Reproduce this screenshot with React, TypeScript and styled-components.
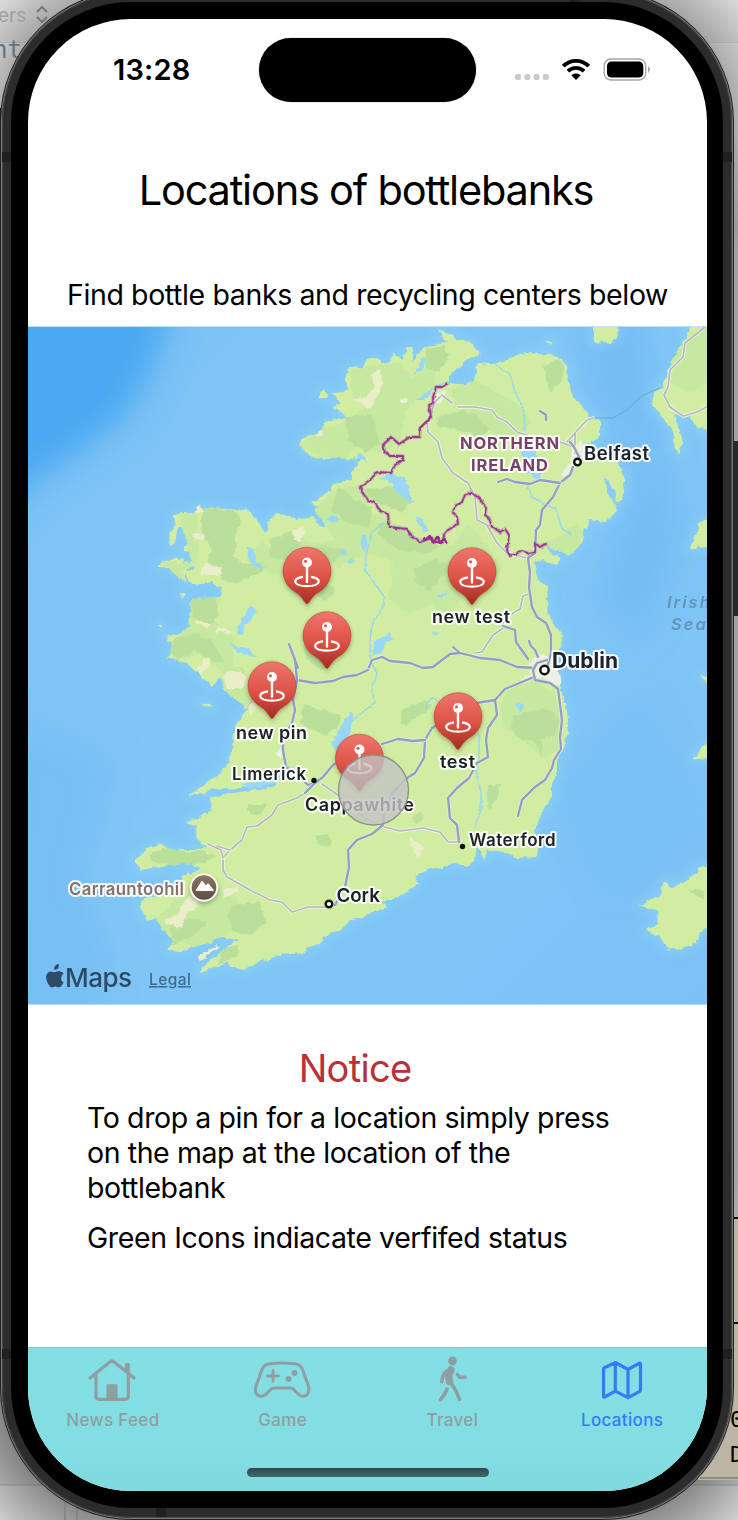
import React from "react";
import styled, { createGlobalStyle } from "styled-components";

const GlobalStyle = createGlobalStyle`
  * { box-sizing: border-box; }
  html, body, #root { margin: 0; height: 100%; }
  body { overflow: hidden; font-family: Inter, "Liberation Sans", sans-serif; color: #000; }
`;

const Desktop = styled.div`
  position: relative;
  width: 738px;
  height: 1520px;
  overflow: hidden;
  display: flex;
  background:
    radial-gradient(circle at 125px 120px, rgba(70,70,70,.75) 70px, transparent 175px),
    radial-gradient(circle at 610px 120px, rgba(70,70,70,.75) 70px, transparent 180px),
    radial-gradient(circle at 125px 1400px, rgba(60,60,60,.8) 80px, transparent 185px),
    radial-gradient(circle at 610px 1400px, rgba(60,60,60,.8) 80px, transparent 185px),
    linear-gradient(#dedede 0 42px, #d2d2d2 42px 43px, #e9e9e9 43px 130px, #a2a2a2 230px 1150px, #cfcfcf 1484px, #adadad 1485px, #dcdcdc 1486px);
`;

const Backdrop = styled.svg`
  position: absolute;
  inset: 0;
`;

const Phone = styled.div`
  position: relative;
  flex: none;
  width: 730px;
  height: 1526px;
  margin: -8px 0 0 2px;
  padding: 10px 9px;
  border-radius: 130px;
  background: #2c2c2c;
  box-shadow: inset 0 0 0 1px #4a4a4a, 0 0 0 1px #777, 0 0 0 2px #222;
`;

const Seam = styled.i<{ $x: number; $y: number; $w: number; $h: number }>`
  position: absolute;
  left: ${(p) => p.$x}px;
  top: ${(p) => p.$y}px;
  width: ${(p) => p.$w}px;
  height: ${(p) => p.$h}px;
  background: #202020;
`;

const Bezel = styled.div`
  position: relative;
  height: 100%;
  padding: 17px 16px 17px 17px;
  border-radius: 120px;
  background: #000;
`;

const Screen = styled.div`
  height: 100%;
  display: flex;
  flex-direction: column;
  border-radius: 103px;
  overflow: hidden;
  background: #fff;
`;

const StatusBar = styled.header`
  height: 101px;
  flex: none;
  display: flex;
  align-items: flex-start;
  padding-left: 85px;
`;

const Clock = styled.div`
  width: 146px;
  padding-top: 32px;
  font-size: 29px;
  line-height: 37px;
  font-weight: 600;
  letter-spacing: 0.15px;
`;

const Island = styled.div`
  width: 217px;
  height: 64px;
  margin-top: 19px;
  border-radius: 32px;
  background: #000;
  box-shadow: 0 0 1px #555;
`;

const StatusIcons = styled.svg`
  margin: 36px 0 0 39px;
`;

const Title = styled.h1`
  margin: 0;
  height: 150px;
  padding-top: 44px;
  padding-right: 3px;
  flex: none;
  font-size: 41.5px;
  line-height: 52px;
  font-weight: 400;
  text-align: center;
  letter-spacing: -1.2px;
  white-space: nowrap;
`;

const Subtitle = styled.p`
  margin: 0;
  height: 56px;
  padding-top: 7px;
  flex: none;
  font-size: 28.5px;
  line-height: 36px;
  text-align: center;
  letter-spacing: -0.38px;
  white-space: nowrap;
`;

const MapFrame = styled.svg`
  display: block;
  flex: none;
  width: 679px;
  height: 679px;
  font-family: Inter, "Liberation Sans", sans-serif;
`;

const NoticeBox = styled.section`
  flex: 1;
  width: 536px;
  margin-left: 59px;
  padding-top: 40px;
`;

const NoticeTitle = styled.h2`
  margin: 0 0 9px;
  font-size: 38px;
  line-height: 46px;
  font-weight: 400;
  color: #bb2f38;
  text-align: center;
  letter-spacing: -0.7px;
`;

const NoticeText = styled.p`
  margin: 0 0 15px;
  font-size: 28.5px;
  line-height: 35px;
  letter-spacing: -0.4px;
  white-space: nowrap;
`;

const TabBar = styled.nav`
  position: relative;
  height: 144px;
  flex: none;
  display: grid;
  grid-template-columns: repeat(4, 1fr);
  border-top: 1px solid #9dbfc4;
  background: linear-gradient(#84dfe5, #83dee4 70%, #7fd9de);
`;

const Tab = styled.a<{ $active?: boolean }>`
  display: flex;
  flex-direction: column;
  align-items: center;
  padding-top: 4px;
  color: ${(p) => (p.$active ? "#347cf6" : "#8f9ea1")};
  font-size: 17px;
  line-height: 22px;
  font-weight: 500;
  letter-spacing: 0.35px;
`;

const TabIcon = styled.svg`
  width: 60px;
  height: 56px;
  margin: 0 1px 1px 0;
  fill: none;
  stroke: currentColor;
  stroke-width: 3.2;
  stroke-linecap: round;
  stroke-linejoin: round;
`;

const HomeIndicator = styled.div`
  position: absolute;
  left: 219px;
  bottom: 14px;
  width: 242px;
  height: 9px;
  border-radius: 5px;
  background: linear-gradient(#2f4a4d, #41686b);
`;

const roads: string[] = [
  "M573 467L570 475 560 483 553 497 542 510 540 525 536 530 535 553 528 558 530 573 529 587 532 607 537 617 546 623 551 635 551 653 547 668",
  "M498 482L507 479 515 482 530 484 540 480 560 483",
  "M540 411l6 4v5",
  "M503 626L515 630 516 642 528 659",
  "M529 641l2 5 4 4 3 7",
  "M453 647L460 653M368 670L372 660 382 657 390 661 410 663 423 668 433 667 450 654 460 653 480 658 500 660 517 667 535 668",
  "M297 680L315 683 333 681 343 677 357 675 368 670",
  "M289 644L298 668 295 660 297 680 293 700 295 710 292 723 283 737 283 750 286 767 297 775 308 785 315 783",
  "M305 793L315 783 323 777 333 765 350 755 375 745",
  "M335 905L345 887 349 867 348 850 357 840 372 834 383 825 384 813 393 792 407 778 415 773 424 758 425 740 432 728 445 720",
  "M425 740L413 741 398 739 382 744",
  "M476 703L495 700 505 689 534 677M495 700L497 715 488 728 486 740 488 757 477 763 469 778 457 788 448 798 450 818 457 825 459 842",
  "M547 660L537 663 533 670 535 680 550 683 558 689 562 720 560 737 561 749 554 760 552 768 545 780 535 787 522 800 518 816",
  "M570 442l4 5 5 10",
];

const minorRoads: string[] = [
  "M442 395L435 402 427 423 428 432 438 442 442 458 453 473 468 483 475 497 477 520 487 525 497 543 507 553 527 558",
  "M442 395l10 8M458 407L475 407 492 410 497 417 507 422 517 432 533 437 560 442 573 447M567 442l8-9v20M575 433L587 420 593 418",
  "M529 594l-6 2-3 13-7 4-10 10",
  "M503 628L493 635 482 652 475 653",
  "M305 793L297 798 278 805 272 815 257 826 247 827 242 840 230 850 223 858 223 870 227 877 250 890 270 900 282 902 292 912 308 907 328 907",
  "M208 844l13 6 2 8M217 846l13 4",
  "M322 784L338 795 360 815 373 822 385 827 400 831 423 828 440 832 448 842 460 842",
  "M705 327L685 343 683 357 670 370 668 387 664 395 670 407 683 416 697 412 710 405",
];

const darkPatches: string[] = [
  "M202 507l35 5 4 9-6 13 2 12-5 10 10 7 25 2-8 9-22 8-15-2-5-12-10-6 4-12-5-12-5-3z",
  "M347 417l25-2 8 30-15 7-17-12z M425 349l20-4 4 14-10 13-13-4-2-13z",
  "M437 416l27-5 15 6 10 12-9 9-18-8-22-3z M545 366l12-6 8 6-4 16-12 10z",
  "M270 540l20-8 12 12-15 16-17-2z M283 556l40-10 24 4-18 18-23 2z",
  "M340 485l16 16 17 6-4 20-20-2-18-15z M362 489l34-2 16 13-10 12-24-9z",
  "M378 523l30 6 12 11 20 5-12 8-30-3-20-15z M414 569l20-9 25 7-18 9-11 15-15-9z",
  "M402 710l16-8 14 2-5 8-13 7-8 6-6-4z M304 704l15 5 22 7-3 11-12 8-12-4-14-9z",
  "M513 717l17-6 22-2 8 15-8 12-12 2 3 18-9-15-13-1-10-13z M488 786l12-2-2 13-8 12-4-2z",
  "M150 855l18-8 22 7 10-4 15 6-10 7-30 2-24-3z M232 905l27-3 8 20-19 13-14-2-6-18z",
  "M191 598l24 0 5 17-12 12-16-12z M174 640l24-7 15 10 13 20-13-2-18-12-16 12-9-10z",
  "M304 646l20 5 10 12-14 6-13-9z M249 805l18-2-5 11-9 1-6-6z M315 836l12-2 5 7-4 7-11-6z",
  "M170 925l22-7 14 3-8 12-24 12z M223 948l15-3-2 12-18 8z M412 817l10-6 1 9-8 3z M690 890l14 1v7l-10-3z",
  "M314 588l18-4 3 6-9 10-8-3z M296 573l8 12-6 8-6-10z",
];

const softPatches: string[] = [
  "M300 446l20-16 25-8 30-20 30 9-5 30-22 12-20-8-13 14-20-2z M350 371l24-7 26-1 12 16 25-20-3 30-24 18-20 15-18-17-20-10z",
  "M315 510l20-20 24-6 13 28 25 12 22 20-22 18-28-8-32 12-20-21 18-7z",
  "M245 560l17-20 10 10 30-13 22 12-18 28-35-4z M452 390l24-10 20 12 26 16 10 16-18 15-33-12-24-6z",
  "M378 525l24 0 18 19 34 0 14-20 14 15 20 27-8 15-28 10-17 24-20-10-20 8-20-14 4-36z",
  "M507 687l24-7 22 12 10 26-5 32-16 8-20-20-16-8-6-20z M191 600l29-2-5 24 20 16-4 24 18 14-26-4-24-18-24 7-5-16 18-18z",
  "M156 920l20-20 28-16 24 5 15 18-8 23-32 16-30-4z",
  "M545 545l30-20 8 4-4 17-11 10z M668 370l15-30 24-16v60l-19 8-20-10z M222 669l20-2 14 20-9 22-24-20z",
  "M180 513l17 0 2 50-14 8-8-6 14-4-5-20z M162 562l14-2 12 22-10-4z",
];

const sandPatches: string[] = [
  "M352 399l14-2 8-10-2-12 8-7 3 15-4 12-9 14z M195 507l5-2 3 5-5 3z M192 534l11-1 1 5-9 2z",
  "M201 574l4-12 6 5 11 1-2 6-13 1z M293 532l9-6 3 3-3 13-8-3z M195 620l15 5-2 4-12-5z M217 626l17 7-5 2-12-4z",
  "M197 670l8-12 7 3-11 14z M223 675l9-5 14 5-1 13-18 0z M248 706l6-4 3 4-7 8z",
  "M181 907l12-17 10 10-18 18-4 10-14-3-2-5 14-7z M222 890l14-3 2 4-15 6z M411 837l7 5 5 6-5 12-4-10-4-2z",
  "M315 434l7-3 2 4-7 2z M197 957l19-11 3 2-19 12z",
];

const lakes: string[] = [
  "M380 478l11-5 15 6 3 14 5 9-12-4-10-15z M248 548l5 0 3 13 6 7-2 2-10-8-2-6z M341 550l4-2 2 6-4 2z",
  "M348 560l6-2 1 4-5 3z",
  "M362 535l5 0-1 17-6-4z M237 628l8-15 7-8 5 7-5 8-7 4-2 11-7-1z M228 645l20 3 9 9-12-2z",
  "M522 448l12-7 3 18-6 12 10 1-3 8-14-8z M515 706l2-5 8 5-4 5z M375 641l14-7 4 4-10 6-1 9-9 2z",
  "M344 722l8-11 2 9-5 14-4 10-6 11-4-5-3-8z M415 517l7 1 7 14-5 0z M436 597l11-5-5 7z M432 632l7-1-3 5z",
  "M288 765l-5 8-20 9-20 1 4 6 25-5 16-9 5-6z M443 384l-10 5-4 9-12 3 4-5 10-7 12-8z M364 455l-6-2 0 4 7 4z",
  "M331 516l9 3-5 3-9-2z M423 355l-5 14-6 7 8-4 5-10z",
];

const rivers: string[] = [
  "M495 364l15 10 4 15 10 22 1 22 2 12",
  "M383 523l-11 9-5 18-2 20 10 14 10 14-4 13-8 11-3 18 1 22 6 12-6 14 4 14-12 10-14 12-8 9",
  "M526 482l6 15 12 7 12 5 6 20 9 5",
  "M426 710l2-8 5-4 9 6M479 732v25l-3 15 5 20 0 18-7 18",
];

const landPaths: string[] = [
  "M298 446L305 437 322 432 325 422 348 418 333 407 340 402 333 393 346 392 346 373 350 367 362 368 367 360 377 358 387 365 395 352 402 360 407 348 413 348 413 362 423 348 437 343 447 342 437 328 453 335 457 340 470 342 480 353 468 359 453 372 444 386 450 383 468 385 475 377 478 363 493 364 507 360 525 352 542 353 557 357 567 365 568 383 573 397 587 412 592 418 600 420 600 435 590 443 580 452 582 458 600 460 617 460 625 480 622 500 617 502 614 490 606 478 600 462 605 475 608 497 617 505 615 513 605 522 590 520 583 533 582 543 568 555 547 545 550 553 562 558 557 565 542 560 534 563 538 580 547 587 547 607 552 623 563 635 560 648 553 655 557 670 560 685 565 703 568 732 563 750 557 760 557 773 552 783 552 797 542 813 535 830 538 847 537 857 515 858 507 853 495 852 487 849 485 860 477 847 475 860 467 867 457 863 437 868 427 870 415 877 418 882 415 888 397 897 382 902 387 907 373 912 362 918 350 920 345 927 323 938 320 945 307 947 305 953 280 955 260 962 243 970 233 967 227 962 210 970 200 973 202 967 217 955 237 940 223 937 197 945 180 952 167 950 175 940 187 930 203 917 180 925 165 925 164 918 148 920 140 907 143 900 180 887 183 877 200 868 187 862 167 865 140 870 135 860 147 848 163 843 170 850 193 850 207 847 197 840 195 825 187 822 200 817 212 810 210 798 233 793 273 787 283 775 240 788 213 790 188 797 207 783 220 772 227 767 232 750 233 735 238 720 250 707 253 688 228 688 220 677 212 687 197 672 187 663 167 657 177 647 165 637 180 633 195 625 190 617 190 605 200 598 223 597 220 587 210 583 192 585 186 573 183 582 175 568 158 567 167 560 183 558 187 572 193 570 197 553 183 550 188 540 184 527 180 525 172 547 169 538 175 520 172 517 180 513 189 520 197 507 213 508 237 510 247 508 255 517 265 533 270 520 277 513 297 520 312 517 320 525 328 525 317 513 325 510 312 503 330 490 330 485 353 480 352 473 363 457 348 460 343 455 330 458 313 457Z",
  "M689 326L685 347 682 363 667 377 662 387 653 393 652 407 663 417 673 430 675 450 680 453 682 443 677 423 675 415 690 417 697 427 710 432V326Z",
  "M593 326H617L618 335 612 342 593 343Z",
  "M710 517L700 523 690 550 710 546Z M710 740L702 748 693 760 710 757Z M700 675L710 678 706 682Z",
  "M710 866L700 868 685 882 673 887 663 883 660 895 639 905 647 908 657 910 658 923 646 930 660 937 667 948 677 950 697 943 700 932 710 927Z",
  "M320 393l3-4 4 5-2 4-5-1z M546 341l7 0-2 4z M180 593l5 1-4 3z M158 624l4 0-2 3z M200 702l10 3 2 3-7-2z",
];

const border =
  "M447 383L443 387 436 387 433 398 433 403 429 405 431 417 420 428 420 437 410 437 399 444 391 437 383 445 385 452 390 456 403 456 403 460 395 465 391 473 377 472 370 480 360 487 362 492 368 500 375 503 380 511 388 514 389 527 407 529 410 535 420 542 426 540 432 538 435 542 443 542 444 535 448 530 458 524 457 517 453 512 455 506 462 502 465 495 471 492 480 499 486 508 485 515 489 518 492 527 500 532 505 529 509 535 507 550 510 556 523 551 527 553 535 552 535 543 540 547 546 544";

interface MapLabel {
  text: string;
  x: number;
  y: number;
  w: number;
  size: number;
  color?: string;
  weight?: number;
}

const labels: MapLabel[] = [
  { text: "NORTHERN", x: 460, y: 449, w: 99, size: 16.5, color: "#78406a", weight: 700 },
  { text: "IRELAND", x: 471, y: 470.5, w: 77, size: 16.5, color: "#78406a", weight: 700 },
  { text: "Belfast", x: 584, y: 460, w: 65, size: 18.5 },
  { text: "Dublin", x: 552, y: 668, w: 66, size: 21, weight: 700 },
  { text: "new test", x: 432, y: 622.5, w: 78, size: 18 },
  { text: "new pin", x: 236, y: 738.5, w: 71, size: 18 },
  { text: "test", x: 440, y: 767.5, w: 35, size: 18 },
  { text: "Limerick", x: 232, y: 780, w: 74, size: 16.8 },
  { text: "Carrauntoohil", x: 69, y: 894.5, w: 115, size: 16.8, color: "#857168" },
  { text: "Waterford", x: 469, y: 846, w: 86.5, size: 17 },
  { text: "Cork", x: 336.5, y: 902, w: 43.5, size: 19 },
];

const pins = [
  [307, 571],
  [472, 571.5],
  [327, 635.5],
  [272, 685.5],
  [458, 716.5],
  [359.5, 758],
];

const HaloText = styled.text`
  paint-order: stroke;
  stroke: rgba(255, 255, 255, 0.88);
  stroke-width: 4px;
  stroke-linejoin: round;
`;

function Pin({ x, y }: { x: number; y: number }) {
  return (
    <g transform={`translate(${x} ${y})`}>
      <path
        d="M0 33C-2 33-4 26-11 21.500A24 24 0 1 1 11 21.500C4 26 2 33 0 33Z"
        fill="url(#pin)"
        stroke="#b9382f"
        strokeWidth=".5"
        filter="url(#pinShadow)"
      />
      <path d="M-4 5.800C-15 7-15 15 0 15.200 15 15 15 7 4 5.800" fill="none" stroke="#fff" strokeWidth="2.200" />
      <path d="M0-5V11" stroke="#fff" strokeWidth="2.400" strokeLinecap="round" />
      <circle cy="-8.500" r="5" fill="#fff" />
      <circle cx="-1.500" cy="-9.700" r="1.600" fill="#e4574c" />
    </g>
  );
}

function IrelandMap() {
  return (
    <MapFrame viewBox="28 326 679 679">
      <defs>
        <linearGradient id="sea" x1="0" y1="0" x2="1" y2="1">
          <stop offset="0" stopColor="#7cc3f5" />
          <stop offset=".5" stopColor="#80c6f6" />
          <stop offset="1" stopColor="#7cc2f5" />
        </linearGradient>
        <linearGradient id="pin" x1="0" y1="0" x2="0" y2="1">
          <stop offset="0" stopColor="#ee766c" />
          <stop offset=".55" stopColor="#dd5146" />
          <stop offset="1" stopColor="#a02b22" />
        </linearGradient>
        <linearGradient id="peak" x1="0" y1="0" x2="0" y2="1">
          <stop offset="0" stopColor="#8c786a" />
          <stop offset="1" stopColor="#5e4c42" />
        </linearGradient>
        <filter id="soft" x="-30%" y="-30%" width="160%" height="160%">
          <feGaussianBlur stdDeviation="16" />
        </filter>
        <filter id="shore">
          <feGaussianBlur stdDeviation="5" />
        </filter>
        <filter id="coast" x="0" y="0" width="100%" height="100%">
          <feTurbulence type="fractalNoise" baseFrequency=".14" numOctaves="3" seed="4" result="n" />
          <feDisplacementMap in="SourceGraphic" in2="n" scale="6" xChannelSelector="R" yChannelSelector="G" />
        </filter>
        <filter id="jagged">
          <feTurbulence type="fractalNoise" baseFrequency=".22" numOctaves="1" seed="9" result="n" />
          <feDisplacementMap in="SourceGraphic" in2="n" scale="3.5" xChannelSelector="R" yChannelSelector="G" />
        </filter>
        <filter id="pinShadow" x="-40%" y="-30%" width="180%" height="170%">
          <feDropShadow dx="0" dy="2" stdDeviation="2" floodColor="#33402a" floodOpacity=".4" />
        </filter>
      </defs>
      <rect x="28" y="326" width="679" height="679" fill="url(#sea)" />
      <g filter="url(#soft)">
        <path d="M0 290H175Q160 375 120 420L75 455 35 480 0 515Z" fill="#4ba8f1" />
        <path d="M580 300L640 300 650 400 680 540 640 640 600 600 640 470 590 390Z" fill="#71baf3" opacity=".75" />
        <path d="M570 790L640 700 690 820 610 890Z" fill="#76bff5" opacity=".7" />
        <path d="M0 720L110 760 80 880 110 960 90 1030H0Z" fill="#73bcf4" opacity=".7" />
      </g>
      <g fill="#8fd1f8" stroke="#8fd1f8" strokeWidth="10" strokeLinejoin="round" opacity=".6" filter="url(#shore)">
        {landPaths.map((d) => <path key={d} d={d} />)}
      </g>
      <g filter="url(#coast)">
        <g fill="#d1eda2">{landPaths.map((d) => <path key={d} d={d} />)}</g>
        <g fill="#c6e8a0">{softPatches.map((d) => <path key={d} d={d} />)}</g>
        <g fill="#badf9b">{darkPatches.map((d) => <path key={d} d={d} />)}</g>
        <g fill="#e9edc8">{sandPatches.map((d) => <path key={d} d={d} />)}</g>
        <g fill="#98d7f8">{lakes.map((d) => <path key={d} d={d} />)}</g>
        <path d="M533 658l12-6 12 12 4 20-10 2-8-9-14 4-14 2 16-9-3-9z M572 447l10-5 6 12-12 14-12 10-4-3 10-10z M437 392l8-1-2 10-8 3z M400 400l8-3-1 6-6 1z M275 755l6-7 1 10z" fill="#eef0e2" />
      </g>
      <g fill="none" stroke="#98d7ee" strokeWidth="1.500" strokeLinejoin="round" filter="url(#jagged)">
        {rivers.map((d) => <path key={d} d={d} />)}
      </g>
      <path d="M593 418L613 418 627 410 643 395 660 388" fill="none" stroke="#6aa8d2" strokeWidth="1" />
      <g fill="none" strokeLinejoin="round" strokeLinecap="round">
        {minorRoads.map((d) => (
          <React.Fragment key={d}>
            <path d={d} stroke="#eef3dc" strokeWidth="3.400" />
            <path d={d} stroke="#b4b8c0" strokeWidth="1.700" />
          </React.Fragment>
        ))}
        {roads.map((d) => (
          <React.Fragment key={d}>
            <path d={d} stroke="#e3edcf" strokeWidth="3.800" />
            <path d={d} stroke="#909fc5" strokeWidth="2.300" />
          </React.Fragment>
        ))}
        <g filter="url(#jagged)">
          <path d={border} stroke="#b274b0" strokeWidth="3.800" opacity=".45" />
          <path d={border} stroke="#9c388f" strokeWidth="1.800" />
          <path d="M425 540l5-4 3 7 4-6 4 6 4-4 2 4" stroke="#9c2b90" strokeWidth="2.400" />
        </g>
      </g>

      <g fill="#5f96bd" fontSize="16.500" fontStyle="italic" fontWeight="600" letterSpacing="2">
        <text x="667" y="608">Irish</text>
        <text x="671" y="629.500">Sea</text>
      </g>
      {labels.map((l) => (
        <HaloText
          key={l.text}
          x={l.x}
          y={l.y}
          textLength={l.w}
          fontSize={l.size}
          fontWeight={l.weight ?? 600}
          fill={l.color ?? "#20222a"}
        >
          {l.text}
        </HaloText>
      ))}
      <g fill="#fff" stroke="#111" strokeWidth="2.400">
        <circle cx="577.500" cy="462" r="3.300" />
        <circle cx="544.500" cy="670" r="4.200" />
        <circle cx="329" cy="904" r="3.300" />
      </g>
      <g fill="#111">
        <circle cx="314" cy="780.500" r="2.700" />
        <circle cx="462.500" cy="846.500" r="2.700" />
      </g>
      <g filter="url(#pinShadow)">
        <circle cx="204" cy="887.500" r="13.200" fill="url(#peak)" stroke="#f4f3ec" strokeWidth="2" />
      </g>
      <path d="M196 890.500l6-9.500 4 5 2-2.500 5.500 7z" fill="#fff" stroke="#fff" strokeLinejoin="round" />
      {pins.map(([x, y]) => <Pin key={`${x}-${y}`} x={x} y={y} />)}
      <HaloText x={305} y={810.5} textLength={109} fontSize={18} fontWeight={600} fill="#20222a">Cappawhite</HaloText>
      <circle cx="373.500" cy="790" r="35" fill="#c3c3c3" fillOpacity=".8" stroke="#8e9389" strokeWidth="1.400" />

      <g fill="#2d4b65">
        <path d="M60.700 970.500c.1-3 1.300-4.600 2.400-5.500-1.700-2.100-4.400-2.300-5.400-2.200-1.500.1-2.800 1-3.700 1-.9 0-2.200-.9-3.500-.9-3.600.1-6.200 4-4 9.800 1.200 3.200 2.800 5.700 4.700 6.200 1.400.1 2-.9 3.700-.9 1.700 0 2.200.9 3.600.8 2-.1 3.700-3.200 4.500-5.100-1.300-.6-2.300-1.800-2.300-3.200z M58 959.500c-.1-1.600.8-2.700 0-4-2.800.5-4.600 3-4.200 5.800 1.800.1 3.400-.6 4.200-1.800z" transform="translate(.5 8.500)" />
        <text x="65" y="986.500" textLength="67" fontSize="26" fontWeight="500">Maps</text>
      </g>
      <text x="149" y="985" textLength="42" fontSize="15.500" fontWeight="500" fill="#416a8d" textDecoration="underline">Legal</text>
      <path d="M28 326.500H707M28 1004.700H707" stroke="#bfe1fa" />
    </MapFrame>
  );
}

export default function App() {
  return (
    <>
      <GlobalStyle />
      <Desktop>
        <Backdrop width="738" height="1520" fontFamily="Inter, sans-serif">
          <text x="-2" y="22" fontSize="19" fill="#a0a0a0">ers</text>
          <path d="M37 12l5-5 5 5M37 17l5 5 5-5" fill="none" stroke="#777" strokeWidth="2" />
          <text x="-7" y="58" fontSize="24" fill="#66737f" fontFamily="DejaVu Sans Mono, monospace">nt</text>
          <path d="M0 108h3v17H0z" fill="#20124d" />
          <path d="M734 441h4v175h-4z" fill="#292929" />
          <path d="M732 1218h6v262h-40z" fill="#bcb5a4" />
          <path d="M700 1478h38" stroke="#918b7d" strokeWidth="2" />
          <path d="M734 1218h4M734 1323h4" stroke="#111" strokeWidth="2" />
          <text x="730" y="1427" fontSize="22" fontFamily="DejaVu Sans Mono, monospace">0</text>
          <text x="730" y="1462" fontSize="22" fontFamily="DejaVu Sans Mono, monospace">D</text>
          <path d="M65 1490v30M77 1490v30" stroke="#777" />
        </Backdrop>
        <Phone>
          <Seam $x={0} $y={160} $w={9} $h={10} />
          <Seam $x={721} $y={160} $w={9} $h={10} />
          <Seam $x={0} $y={1357} $w={9} $h={10} />
          <Seam $x={721} $y={1357} $w={9} $h={10} />
          <Seam $x={154} $y={1516} $w={10} $h={9} />
          <Seam $x={568} $y={0} $w={10} $h={10} />
          <Bezel>
            <Screen>
              <StatusBar>
                <Clock>13:28</Clock>
                <Island />
                <StatusIcons width="138" height="30" viewBox="515 55 138 30">
                  <g fill="#cacaca">
                    {[515, 524.3, 533.6, 542.9].map((x) => (
                      <rect key={x} x={x} y="74" width="6" height="6" rx="2" />
                    ))}
                  </g>
                  <g fill="none" stroke="#000" strokeWidth="3.800">
                    <path d="M563.200 66.200C570.500 59 581.500 59 588.800 66.200" />
                    <path d="M567.900 71.200C572.500 66.800 579.500 66.800 584.100 71.200" />
                  </g>
                  <path d="M576 80L571.300 75.300C574 72.800 578 72.800 580.700 75.300Z" />
                  <rect x="604.200" y="59" width="41.500" height="21" rx="6.500" fill="none" stroke="#a6a6a6" strokeWidth="1.400" />
                  <rect x="607" y="61.500" width="36.300" height="16" rx="4.500" />
                  <path d="M648 66q4 3.500 0 7z" fill="#a6a6a6" />
                </StatusIcons>
              </StatusBar>
              <Title>Locations of bottlebanks</Title>
              <Subtitle>Find bottle banks and recycling centers below</Subtitle>
              <IrelandMap />
              <NoticeBox>
                <NoticeTitle>Notice</NoticeTitle>
                <NoticeText>
                  To drop a pin for a location simply press<br />
                  on the map at the location of the<br />
                  bottlebank
                </NoticeText>
                <NoticeText>Green Icons indiacate verfifed status</NoticeText>
              </NoticeBox>
              <TabBar>
                <Tab>
                  <TabIcon viewBox="82 1352 60 56">
                    <path d="M90 1378L110.500 1361.500Q112 1360.500 113.500 1361.500L134 1378M96 1375V1396.500Q96 1399.300 99 1399.300H125.500Q128.300 1399.300 128.300 1396.500V1375" />
                    <path d="M124.800 1364.500q0-1.500 1.500-1.500h2q1.500 0 1.500 1.500v9l-5-4z M106.500 1399v-13.500q0-1.200 1.200-1.200h8.600q1.200 0 1.200 1.200V1399z" fill="currentColor" stroke="none" />
                  </TabIcon>
                  News Feed
                </Tab>
                <Tab>
                  <TabIcon viewBox="252 1352 60 56">
                    <path d="M268.500 1364Q282 1362 296 1364 300.500 1364.700 302.500 1369.500L308.300 1386C310.500 1393 306.500 1396.500 302.500 1396.200 299 1396 298 1394 294 1389.500Q292.500 1388 290.500 1388H274Q272 1388 270.500 1389.500C266.500 1394 265 1396 261.500 1396.200 257.500 1396.500 253.800 1393 256 1386L262 1369.500Q264 1364.700 268.500 1364Z" strokeWidth="3" />
                    <path d="M273 1370.500v11M267.500 1376h11" strokeWidth="2.800" />
                    <g fill="currentColor" stroke="none"><circle cx="294.500" cy="1373" r="2.900" /><circle cx="288.500" cy="1379" r="2.900" /></g>
                  </TabIcon>
                  Game
                </Tab>
                <Tab>
                  <TabIcon viewBox="422 1352 60 56">
                    <circle cx="452.500" cy="1361" r="4.400" fill="currentColor" stroke="none" />
                    <path d="M449.500 1370Q442.500 1372 441.800 1382" strokeWidth="3.400" />
                    <path d="M451 1370Q447.500 1376 449.500 1381.500" strokeWidth="7.500" />
                    <path d="M449.800 1382Q455 1387 459.500 1399.500M447 1389Q445.500 1394 440.500 1399.500M457.500 1374.500L459.500 1377.200H465" strokeWidth="3.600" />
                  </TabIcon>
                  Travel
                </Tab>
                <Tab $active>
                  <TabIcon viewBox="592 1352 60 56">
                    <path d="M603.500 1369.500Q603.500 1368.300 604.500 1367.700L615.300 1362.500 628 1369.500 639.500 1363.200Q640.500 1363 640.500 1364.500V1389.500Q640.500 1391 639.300 1391.600L628 1397.700 615.300 1391.200 604.700 1397Q603.500 1397.300 603.500 1396Z M615.300 1363V1391M628 1370V1397" />
                  </TabIcon>
                  Locations
                </Tab>
                <HomeIndicator />
              </TabBar>
            </Screen>
          </Bezel>
        </Phone>
      </Desktop>
    </>
  );
}
